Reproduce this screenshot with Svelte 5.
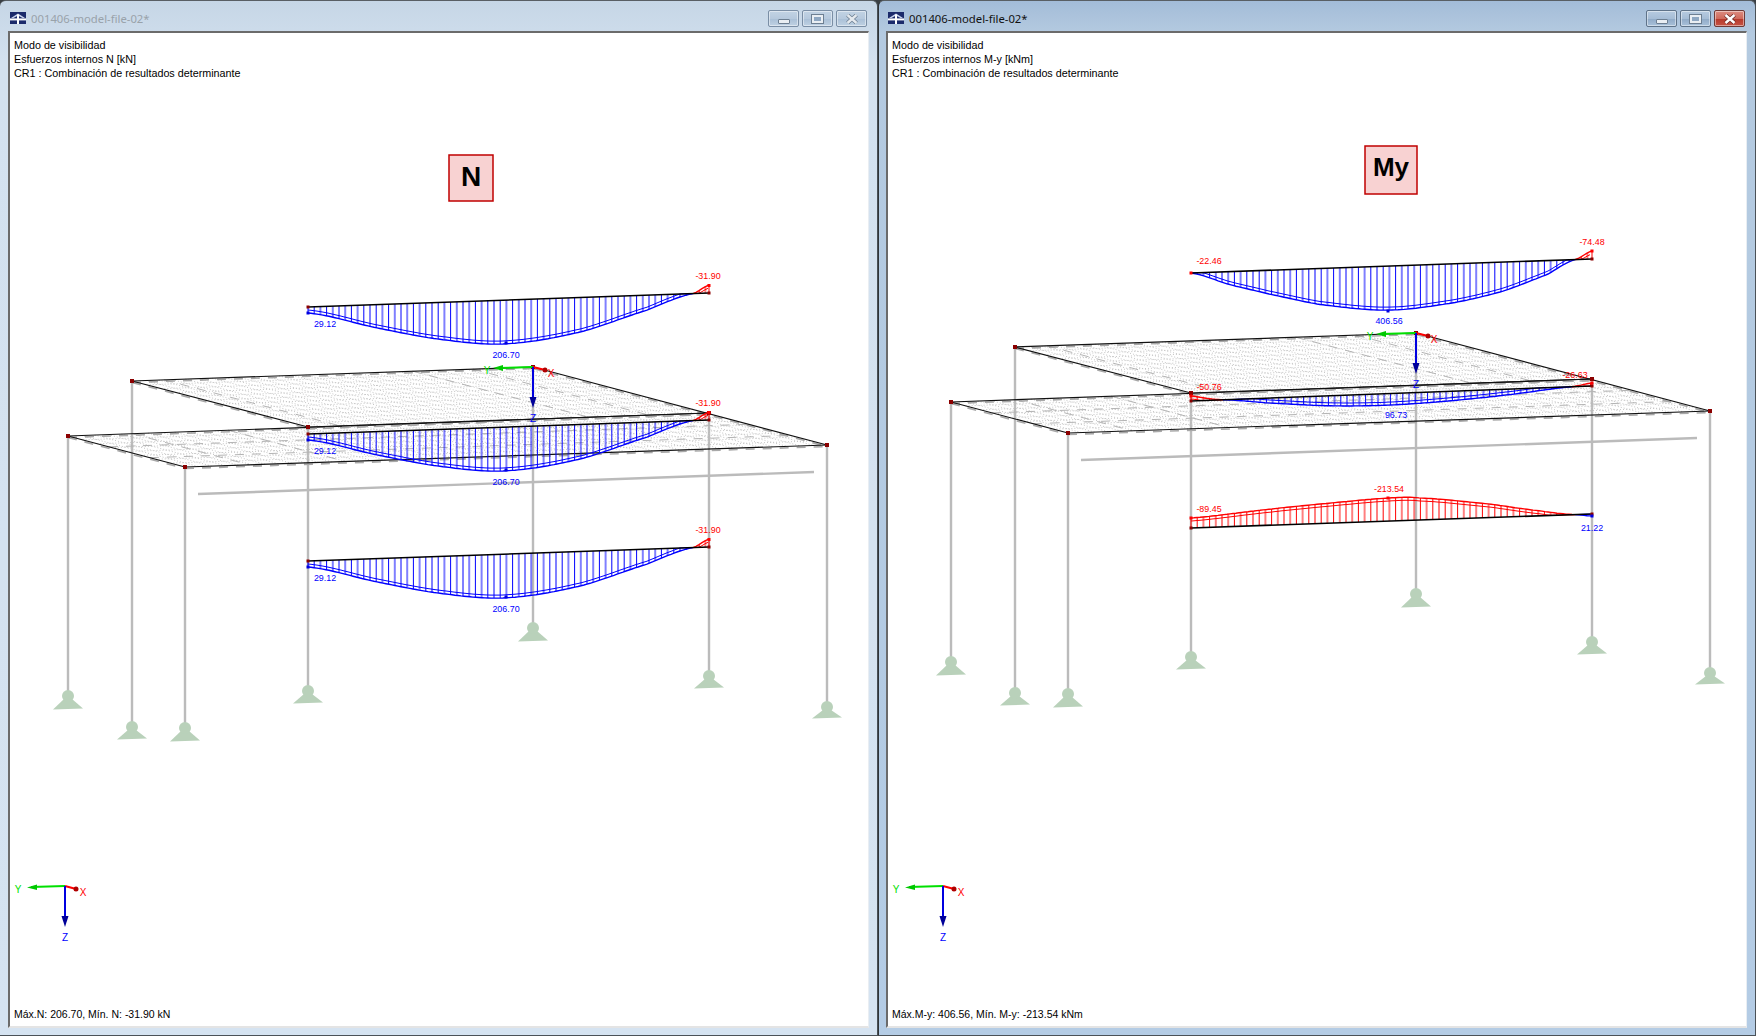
<script>
  // node positions of the frame, in page coordinates of the left window
  const A = [132, 381], B = [533, 367], C = [709, 413], D = [308, 427]
  const E = [68, 436], F = [185, 467], G = [827, 445]

  const columns = [
    { top: E, ball: 696, foot: 709 },
    { top: A, ball: 727, foot: 739 },
    { top: F, ball: 728, foot: 741 },
    { top: D, ball: 691, foot: 703 },
    { top: B, ball: 628, foot: 641 },
    { top: C, ball: 676, foot: 688 },
    { top: G, ball: 707, foot: 718 }
  ]

  const mix = (p, q, t) => [p[0] + (q[0] - p[0]) * t, p[1] + (q[1] - p[1]) * t]

  function meshLines(a, b, c, d, nu, nv) {
    const out = []
    for (let i = 1; i < nu; i++) {
      const t = i / nu
      out.push([mix(a, d, t), mix(b, c, t)])
    }
    for (let j = 1; j < nv; j++) {
      const t = j / nv
      out.push([mix(a, b, t), mix(d, c, t)])
    }
    return out
  }

  const mesh = [...meshLines(A, B, C, D, 12, 30), ...meshLines(E, C, G, F, 8, 48)]
  const seams = [
    [mix(E, F, 0.35), mix(C, G, 0.35)],
    [mix(E, F, 0.7), mix(C, G, 0.7)],
    [mix(E, C, 0.1), mix(F, G, 0.1)],
    [mix(E, C, 0.25), mix(F, G, 0.25)],
    [mix(A, B, 0.08), mix(D, C, 0.08)],
    [mix(A, B, 0.7), mix(D, C, 0.7)],
    [mix(A, B, 0.85), mix(D, C, 0.85)]
  ]
  const edges = [[A, B], [A, D], [B, G], [E, C], [E, F], [F, G], [D, C]]

  // catmull-rom through [x, offset] samples
  function curveAt(pts, x) {
    let i = 0
    while (i < pts.length - 2 && x > pts[i + 1][0]) i++
    const p0 = pts[Math.max(i - 1, 0)], p1 = pts[i], p2 = pts[i + 1], p3 = pts[Math.min(i + 2, pts.length - 1)]
    const t = (x - p1[0]) / (p2[0] - p1[0])
    return 0.5 * (2 * p1[1] + (p2[1] - p0[1]) * t
      + (2 * p0[1] - 5 * p1[1] + 4 * p2[1] - p3[1]) * t * t
      + (3 * p1[1] - p0[1] - 3 * p2[1] + p3[1]) * t * t * t)
  }

  function buildDiagram(d) {
    const baseY = x => d.y0 + (d.y1 - d.y0) * (x - d.x0) / (d.x1 - d.x0)
    const parts = d.parts.map(part => {
      const from = part.pts[0][0], to = part.pts[part.pts.length - 1][0]
      const last = part.pts[part.pts.length - 1][1]
      const outer = [], inner = [], hatch = []
      for (let x = from; x <= to; x += 3) {
        const v = curveAt(part.pts, x)
        outer.push(`${x},${(baseY(x) + v).toFixed(1)}`)
        const w = Math.sign(v) * Math.max(Math.abs(v) - 3, 0)
        inner.push(`${x},${(baseY(x) + w).toFixed(1)}`)
      }
      outer.push(`${to},${(baseY(to) + last).toFixed(1)}`)
      for (let x = from; x <= to; x += 6.2) {
        hatch.push({ x, a: baseY(x), b: baseY(x) + curveAt(part.pts, x) })
      }
      hatch.push({ x: to, a: baseY(to), b: baseY(to) + last })
      return { color: part.color, outer: outer.join(' '), inner: inner.join(' '), hatch }
    })
    return { ...d, parts }
  }

  const leftCurve = [[308, 6], [380, 24], [447, 38], [507, 43.7], [580, 34.5], [647, 15], [693, 0]]
  const leftDiagram = dy => ({
    x0: 308, y0: 307 + dy, x1: 709, y1: 293 + dy,
    parts: [
      { color: '#0000ff', pts: leftCurve },
      { color: '#ff0000', pts: [[693, 0], [709, -8]] }
    ],
    nodes: [[308, 307 + dy, '#8b0000'], [709, 293 + dy, '#8b0000'], [308, 313 + dy, '#0000e0'], [506, 343 + dy, '#0000e0'], [709, 285.5 + dy, '#ff0000']],
    labels: [
      { x: 708, y: 279 + dy, text: '-31.90', color: '#ff0000' },
      { x: 325, y: 327 + dy, text: '29.12', color: '#0000ff' },
      { x: 506, y: 358 + dy, text: '206.70', color: '#0000ff' }
    ]
  })

  const rightDiagrams = [
    {
      x0: 1191, y0: 273, x1: 1592, y1: 259,
      parts: [
        { color: '#0000ff', pts: [[1191, 0], [1230, 13], [1270, 24], [1320, 36], [1388, 44], [1453, 39], [1503, 29], [1547, 14], [1575, 0]] },
        { color: '#ff0000', pts: [[1575, 0], [1592, -8]] }
      ],
      nodes: [[1191, 273, '#ff0000'], [1592, 259, '#8b0000'], [1388, 311, '#0000e0'], [1592, 251, '#ff0000']],
      labels: [
        { x: 1592, y: 245, text: '-74.48', color: '#ff0000' },
        { x: 1209, y: 264, text: '-22.46', color: '#ff0000' },
        { x: 1389, y: 324, text: '406.56', color: '#0000ff' }
      ]
    },
    {
      x0: 1191, y0: 401, x1: 1592, y1: 386,
      parts: [
        { color: '#ff0000', pts: [[1191, -5], [1207, -2], [1223, 0]] },
        { color: '#0000ff', pts: [[1223, 0], [1270, 5], [1330, 10], [1388, 11.5], [1450, 9.5], [1510, 5.5], [1572, 0]] },
        { color: '#ff0000', pts: [[1572, 0], [1592, -3]] }
      ],
      nodes: [[1191, 401, '#8b0000'], [1191, 396, '#ff0000'], [1592, 386, '#8b0000'], [1592, 383, '#ff0000']],
      labels: [
        { x: 1209, y: 390, text: '-50.76', color: '#ff0000' },
        { x: 1575, y: 378, text: '-26.63', color: '#ff0000' },
        { x: 1396, y: 418, text: '96.73', color: '#0000ff' }
      ]
    },
    {
      x0: 1191, y0: 528, x1: 1592, y1: 514,
      parts: [
        { color: '#ff0000', pts: [[1191, -10], [1270, -16], [1320, -19.5], [1388, -23], [1420, -22], [1490, -13.5], [1540, -5], [1575, 0]] },
        { color: '#0000ff', pts: [[1575, 0], [1592, 2]] }
      ],
      nodes: [[1191, 528, '#8b0000'], [1191, 518, '#ff0000'], [1388, 498, '#ff0000'], [1592, 514, '#8b0000'], [1592, 516, '#0000e0']],
      labels: [
        { x: 1209, y: 512, text: '-89.45', color: '#ff0000' },
        { x: 1389, y: 492, text: '-213.54', color: '#ff0000' },
        { x: 1592, y: 531, text: '21.22', color: '#0000ff' }
      ]
    }
  ]

  const windows = [
    {
      active: false,
      origin: [10, 33],
      shift: [0, 0],
      axisX: 65,
      lines: ['Modo de visibilidad', 'Esfuerzos internos N [kN]', 'CR1 : Combinación de resultados determinante'],
      footer: 'Máx.N: 206.70, Mín. N: -31.90 kN',
      badge: { x: 449, y: 155, w: 44, h: 46, text: 'N', size: 28, drop: 8 },
      diagrams: [leftDiagram(0), leftDiagram(127), leftDiagram(254)].map(buildDiagram)
    },
    {
      active: true,
      origin: [888, 33],
      shift: [883, -34],
      axisX: 943,
      lines: ['Modo de visibilidad', 'Esfuerzos internos M-y [kNm]', 'CR1 : Combinación de resultados determinante'],
      footer: 'Máx.M-y: 406.56, Mín. M-y: -213.54 kNm',
      badge: { x: 1365, y: 146, w: 52, h: 48, text: 'My', size: 26, drop: 6 },
      diagrams: rightDiagrams.map(buildDiagram)
    }
  ]
</script>

{#each windows as win}
  <section class="window" class:active={win.active}>
    <header class="titlebar">
      <svg class="appicon" viewBox="0 0 16 12" width="16" height="12" aria-hidden="true">
        <rect width="16" height="12" fill="#1b2a6b" />
        <path d="M1 6 L8 1.5 L15 6 L12.5 6 L8 3.5 L3.5 6 Z" fill="#c9d4ee" />
        <rect x="0" y="6.4" width="16" height="2" fill="#ffffff" />
        <rect x="7" y="2.5" width="2" height="9.5" fill="#ffffff" />
      </svg>
      <span class="title">001406-model-file-02*</span>
      <div class="buttons">
        <button class="winbtn" aria-label="Minimizar">
          <span class="min"></span>
        </button>
        <button class="winbtn" aria-label="Maximizar">
          <span class="max"></span>
        </button>
        <button class="winbtn close" aria-label="Cerrar">
          <svg viewBox="0 0 12 10" width="12" height="10">
            <path d="M1.5 1 L10.5 9 M10.5 1 L1.5 9" class="x-out" />
            <path d="M1.5 1 L10.5 9 M10.5 1 L1.5 9" class="x-in" />
          </svg>
        </button>
      </div>
    </header>

    <div class="client">
      <svg class="canvas" width="100%" height="100%">
        <g transform="translate({-win.origin[0]} {-win.origin[1]})">
          <g transform="translate({win.shift[0]} {win.shift[1]})">
            <line x1="198" y1="494" x2="814" y2="472" class="member" />
            {#each columns as col}
              <line x1={col.top[0]} y1={col.top[1]} x2={col.top[0]} y2={col.ball} class="member" />
              <polygon class="support" points="{col.top[0] - 4},{col.ball + 3} {col.top[0] + 4},{col.ball + 3} {col.top[0] + 15},{col.foot - 0.5} {col.top[0] - 15},{col.foot + 0.5}" />
              <circle class="support" cx={col.top[0]} cy={col.ball} r="6" />
            {/each}
            {#each mesh as m}
              <line x1={m[0][0]} y1={m[0][1]} x2={m[1][0]} y2={m[1][1]} class="mesh" />
            {/each}
            {#each seams as m}
              <line x1={m[0][0]} y1={m[0][1]} x2={m[1][0]} y2={m[1][1]} class="seam" />
            {/each}
            {#each edges as e}
              <line x1={e[0][0]} y1={e[0][1] + 1.5} x2={e[1][0]} y2={e[1][1] + 1.5} class="seam edge" />
              <line x1={e[0][0]} y1={e[0][1]} x2={e[1][0]} y2={e[1][1]} class="outline" />
            {/each}
            {#each [A, B, C, D, E, F, G] as n}
              <rect x={n[0] - 2} y={n[1] - 2} width="4" height="4" fill="#8b0000" />
            {/each}
            <line x1="533" y1="367" x2="497" y2="368" class="ax-y" />
            <polygon points="493,368 503,365 503,371" fill="#00c800" />
            <line x1="533" y1="367" x2="545" y2="370" class="ax-x" />
            <circle cx="545" cy="370" r="2.5" fill="#b00000" />
            <line x1="533" y1="367" x2="533" y2="402" class="ax-z" />
            <polygon points="533,408 529.5,397 536.5,397" fill="#000099" />
            <text x="487" y="374" class="axis-label" fill="#00e000">Y</text>
            <text x="551" y="377" class="axis-label" fill="#ff0000">X</text>
            <text x="533" y="422" class="axis-label" fill="#0000ff">Z</text>
          </g>

          {#each win.diagrams as d}
            {#each d.parts as part}
              {#each part.hatch as h, i}
                <line x1={h.x} y1={h.a} x2={h.x} y2={h.b} stroke={part.color} stroke-width={i % 2 ? 1 : 2} stroke-opacity={i % 2 ? 1 : 0.5} />
              {/each}
              <polyline points={part.inner} fill="none" stroke={part.color} stroke-width="1" />
              <polyline points={part.outer} fill="none" stroke={part.color} stroke-width="1.4" />
            {/each}
            <line x1={d.x0} y1={d.y0} x2={d.x1} y2={d.y1} stroke="#000" stroke-width="1.6" />
            {#each d.nodes as n}
              <rect x={n[0] - 1.5} y={n[1] - 1.5} width="3" height="3" fill={n[2]} />
            {/each}
            {#each d.labels as l}
              <text x={l.x} y={l.y} class="value" fill={l.color}>{l.text}</text>
            {/each}
          {/each}

          <rect class="badge" x={win.badge.x} y={win.badge.y} width={win.badge.w} height={win.badge.h} />
          <text class="badge-text" font-size={win.badge.size} x={win.badge.x + win.badge.w / 2} y={win.badge.y + win.badge.h / 2 + win.badge.drop}>{win.badge.text}</text>

          <g transform="translate({win.axisX} 886)">
            <line x1="0" y1="0" x2="-34" y2="1" class="ax-y" />
            <polygon points="-38,1.5 -28,-1.5 -28,4" fill="#00c800" />
            <line x1="0" y1="0" x2="11" y2="3" class="ax-x" />
            <circle cx="11" cy="3" r="2.5" fill="#b00000" />
            <line x1="0" y1="0" x2="0" y2="35" class="ax-z" />
            <polygon points="0,41 -3.5,30 3.5,30" fill="#000099" />
            <text x="-47" y="7" class="axis-label" fill="#00e000">Y</text>
            <text x="18" y="10" class="axis-label" fill="#ff0000">X</text>
            <text x="0" y="55" class="axis-label" fill="#0000ff">Z</text>
          </g>
        </g>
      </svg>

      <div class="info">
        {#each win.lines as line}
          <div>{line}</div>
        {/each}
      </div>
      <div class="info footer">{win.footer}</div>
    </div>
  </section>
{/each}

<style>
  :global(body) {
    margin: 0;
    display: flex;
    width: 1756px;
    height: 1036px;
    overflow: hidden;
    background: #3a3f44;
  }

  :global(#app) {
    display: flex;
    width: 1756px;
    height: 1036px;
  }

  .window {
    flex: 0 0 878px;
    box-sizing: border-box;
    height: 1036px;
    display: flex;
    flex-direction: column;
    padding: 0 8px 7px 8px;
    background: linear-gradient(#c6d6e6 0, #d3e1ef 60px, #d5e3f1 100%);
    border: 1px solid #4a5157;
    border-top-color: #595f64;
    border-radius: 6px 6px 0 0;
    border-width: 1px 1px 1px 0;
  }

  .window.active {
    background: linear-gradient(#a3bcd8 0, #b4cae0 32px, #b4cce5 100%);
    border-left: 1px solid #2f3438;
    padding-left: 7px;
  }

  .titlebar {
    flex: 0 0 30px;
    display: flex;
    align-items: center;
    gap: 5px;
    padding: 0 0 0 2px;
    box-sizing: border-box;
  }

  .appicon {
    margin-top: 4px;
  }

  .title {
    font: 11.3px "Noto Sans", "Liberation Sans", sans-serif;
    color: #99a2aa;
    margin-top: 4px;
  }

  .active .title {
    color: #111;
  }

  .buttons {
    margin-left: auto;
    display: flex;
    gap: 3px;
    margin-right: 2px;
    margin-top: 6px;
    align-self: flex-start;
    padding-top: 3px;
  }

  .winbtn {
    width: 31px;
    height: 17px;
    padding: 0;
    display: flex;
    align-items: center;
    justify-content: center;
    border: 1px solid #7a8ea5;
    border-radius: 2px;
    background: linear-gradient(#c2d3e4 0, #b6c9dd 50%, #a9bfd6 51%, #bfd1e3 100%);
    box-shadow: inset 0 0 0 1px rgba(255, 255, 255, 0.45);
  }

  .active .winbtn {
    border-color: #5f7389;
    background: linear-gradient(#b7cbe0 0, #a6bdd6 50%, #8fa9c6 51%, #a9c1da 100%);
  }

  .active .winbtn.close {
    background: linear-gradient(#dc8c80 0, #cf6a5c 50%, #b6382a 51%, #c65445 100%);
    border-color: #6e3a36;
  }

  .min {
    width: 10px;
    height: 3px;
    margin-top: 5px;
    background: #e9eef3;
    border: 1px solid #6d7f92;
    border-radius: 1px;
  }

  .max {
    width: 7px;
    height: 4px;
    border: 2px solid #e9eef3;
    outline: 1px solid #6d7f92;
    background: #8ea7c2;
  }

  .x-out {
    fill: none;
    stroke: #6d7f92;
    stroke-width: 4;
  }

  .x-in {
    fill: none;
    stroke: #e4e9ee;
    stroke-width: 2.4;
  }

  .active .x-out {
    stroke: #6b2a25;
  }

  .active .x-in {
    stroke: #fff;
  }

  .client {
    position: relative;
    flex: 1;
    display: flex;
    flex-direction: column;
    justify-content: space-between;
    background: #fff;
    border-style: solid;
    border-width: 2px 1px 2px 2px;
    border-color: #6b6b6b #e9eef3 #e4e4e4 #6b6b6b;
    padding: 5px 5px 5px 4px;
    font: 10.75px/14px "Liberation Sans", Arial, sans-serif;
    color: #000;
  }

  .info {
    position: relative;
  }

  .footer {
    font-size: 10.5px;
  }

  .canvas {
    position: absolute;
    left: 0;
    top: 0;
  }

  .member {
    stroke: #bbbbbb;
    stroke-width: 2.4;
  }

  .support {
    fill: #b9d1ba;
  }

  .mesh {
    stroke: #c6c6c6;
    stroke-width: 1;
    stroke-dasharray: 1 2;
  }

  .seam {
    stroke: #b4b4b4;
    stroke-width: 1;
    stroke-dasharray: 9 8;
  }

  .edge {
    stroke: #a8a8a8;
    stroke-width: 1.6;
  }

  .outline {
    stroke: #111;
    stroke-width: 1.2;
  }

  .ax-y {
    stroke: #00e000;
    stroke-width: 2;
  }

  .ax-x {
    stroke: #ff0000;
    stroke-width: 2;
  }

  .ax-z {
    stroke: #0000e0;
    stroke-width: 2;
  }

  .axis-label {
    font: 10px "Liberation Sans", Arial, sans-serif;
    text-anchor: middle;
  }

  .value {
    font: 8.9px "Liberation Sans", Arial, sans-serif;
    text-anchor: middle;
  }

  .badge {
    fill: #f8d2d2;
    stroke: #c00000;
    stroke-width: 1.5;
  }

  .badge-text {
    font-family: "Liberation Sans", Arial, sans-serif;
    font-weight: bold;
    text-anchor: middle;
    fill: #000;
  }
</style>
